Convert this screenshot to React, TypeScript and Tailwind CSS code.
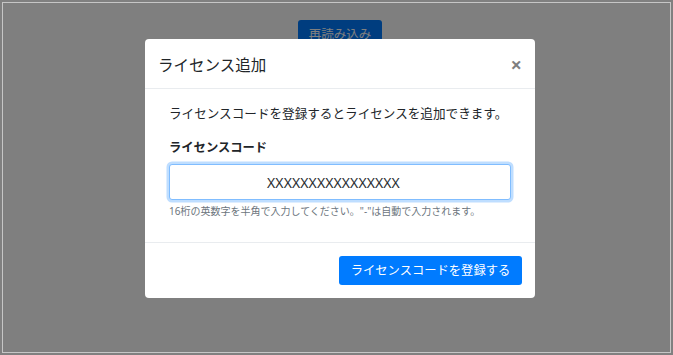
import { useState } from "react";

const font = { fontFamily: '"Noto Sans", "Noto Sans CJK JP", sans-serif' };

export default function App() {
  const [code, setCode] = useState("XXXXXXXXXXXXXXXX");

  return (
    <div className="h-[355px] w-[673px] bg-[#808080] p-[2px]" style={font}>
      <div className="relative h-full w-full border border-[#c6c6c6] bg-white overflow-hidden">
        {/* page behind the backdrop */}
        <div className="flex justify-center pl-[7px] pt-[17px]">
          <button className="h-[30px] w-[84px] rounded-[3px] bg-[#007bff] text-[12.5px] leading-[30px] text-white">
            再読み込み
          </button>
        </div>

        {/* backdrop + modal */}
        <div className="absolute inset-0 bg-black/50">
          <div className="flex justify-center pl-[7px] pt-[36px]">
            <div className="w-[390px] rounded-[4px] bg-white text-[#212529]">
              <div className="flex h-[50px] items-center justify-between border-b border-[#e9ecef] pl-[13px] pr-[13px]">
                <h5 className="pt-[2px] text-[15.5px] leading-[20px]">ライセンス追加</h5>
                <button className="pt-[2px] text-[20px] font-bold leading-none text-black opacity-50">×</button>
              </div>

              <div className="px-[24px] pt-[16px] pb-[24px]">
                <p className="text-[12.6px] leading-[18px]">
                  ライセンスコードを登録するとライセンスを追加できます。
                </p>
                <label className="mt-[16px] block text-[12.3px] font-bold leading-[18px]">
                  ライセンスコード
                </label>
                <input
                  value={code}
                  onChange={(e) => setCode(e.target.value)}
                  className="mt-[7px] block h-[36px] w-full rounded-[3px] border border-[#80bdff] bg-white pr-[13px] text-center text-[14px] tracking-[0.1px] text-[#2b2f33] shadow-[0_0_0_2.5px_rgba(0,123,255,0.25)] outline-none"
                />
                <p className="mt-[4px] text-[10px] leading-[14px] text-[#6c757d]">
                  16桁の英数字を半角で入力してください。"-"は自動で入力されます。
                </p>
              </div>

              <div className="flex justify-end border-t border-[#e9ecef] px-[13px] py-[13px]">
                <button className="h-[29px] w-[183px] rounded-[3px] bg-[#007bff] text-[12.3px] leading-[29px] text-white">
                  ライセンスコードを登録する
                </button>
              </div>
            </div>
          </div>
        </div>
      </div>
    </div>
  );
}
